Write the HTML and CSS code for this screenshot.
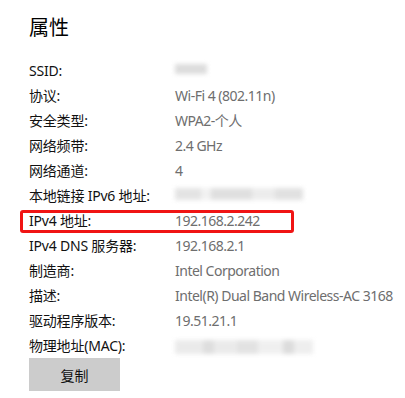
FILE: index.html
```html
<!DOCTYPE html>
<html lang="zh-CN">
<head>
<meta charset="utf-8">
<link rel="stylesheet" href="styles.css">
</head>
<body>
<div class="page">
  <h1 class="title">属性</h1>
  <div class="props">
    <div class="row"><span class="label">SSID:</span><span class="value"><span class="blur b-ssid"></span></span></div>
    <div class="row"><span class="label">协议:</span><span class="value">Wi-Fi 4 (802.11n)</span></div>
    <div class="row"><span class="label">安全类型:</span><span class="value">WPA2-个人</span></div>
    <div class="row"><span class="label">网络频带:</span><span class="value">2.4 GHz</span></div>
    <div class="row"><span class="label">网络通道:</span><span class="value">4</span></div>
    <div class="row"><span class="label">本地链接 IPv6 地址:</span><span class="value"><span class="blur b-ipv6"></span></span></div>
    <div class="row hl"><span class="label">IPv4 地址:</span><span class="value">192.168.2.242</span><span class="mark"></span></div>
    <div class="row"><span class="label">IPv4 DNS 服务器:</span><span class="value">192.168.2.1</span></div>
    <div class="row"><span class="label">制造商:</span><span class="value">Intel Corporation</span></div>
    <div class="row"><span class="label">描述:</span><span class="value">Intel(R) Dual Band Wireless-AC 3168</span></div>
    <div class="row"><span class="label">驱动程序版本:</span><span class="value">19.51.21.1</span></div>
    <div class="row"><span class="label">物理地址(MAC):</span><span class="value"><span class="blur b-mac"></span></span></div>
  </div>
  <button class="copy">复制</button>
</div>
</body>
</html>
```

FILE: styles.css
```css
html, body {
  margin: 0;
  padding: 0;
  background: #ffffff;
}
body {
  font-family: "Noto Sans", "Noto Sans CJK SC", sans-serif;
  color: #000;
}
.page {
  padding: 14px 0 0 29px;
  width: 376px;
  height: 384px;
  overflow: hidden;
}
.title {
  margin: 0;
  font-size: 20px;
  font-weight: normal;
  line-height: 26px;
  height: 26px;
  font-family: "Noto Sans CJK SC", sans-serif;
}
.props {
  margin-top: 18px;
  display: flex;
  flex-direction: column;
}
.row {
  display: flex;
  height: 25px;
  line-height: 25px;
  font-size: 14px;
  position: relative;
  white-space: nowrap;
}
.label {
  width: 146px;
  flex: none;
  color: #111;
  letter-spacing: -0.2px;
}
.value {
  color: #6e6e6e;
  display: flex;
  align-items: center;
  letter-spacing: -0.5px;
}
.blur {
  display: block;
  background: #d4d4d4;
  filter: blur(2px);
  opacity: 0.8;
}
.b-ssid { width: 32px; height: 10px; margin-top: -3px; }
.b-ipv6 { width: 128px; height: 12px; margin-top: -3px; background: linear-gradient(90deg, #ddd 0 20%, #eee 20% 28%, #d8d8d8 28% 60%, #e8e8e8 60% 78%, #dadada 78%); }
.b-mac { width: 138px; height: 14px; margin-top: 2px; background: linear-gradient(90deg, #e6e6e6 0 20%, #d6d6d6 20% 28%, #e6e6e6 28% 45%, #dcdcdc 45% 60%, #ececec 60% 78%, #d4d4d4 78% 86%, #eaeaea 86%); }
.mark {
  position: absolute;
  left: -9px;
  top: 2px;
  width: 268px;
  height: 17px;
  border: 3px solid #f01414;
  border-radius: 3px;
}
.copy {
  display: block;
  margin-top: 0;
  width: 91px;
  height: 33px;
  border: none;
  background: #cccccc;
  color: #111;
  font-family: "Noto Sans CJK SC", sans-serif;
  font-size: 14px;
  padding: 0;
}
```
